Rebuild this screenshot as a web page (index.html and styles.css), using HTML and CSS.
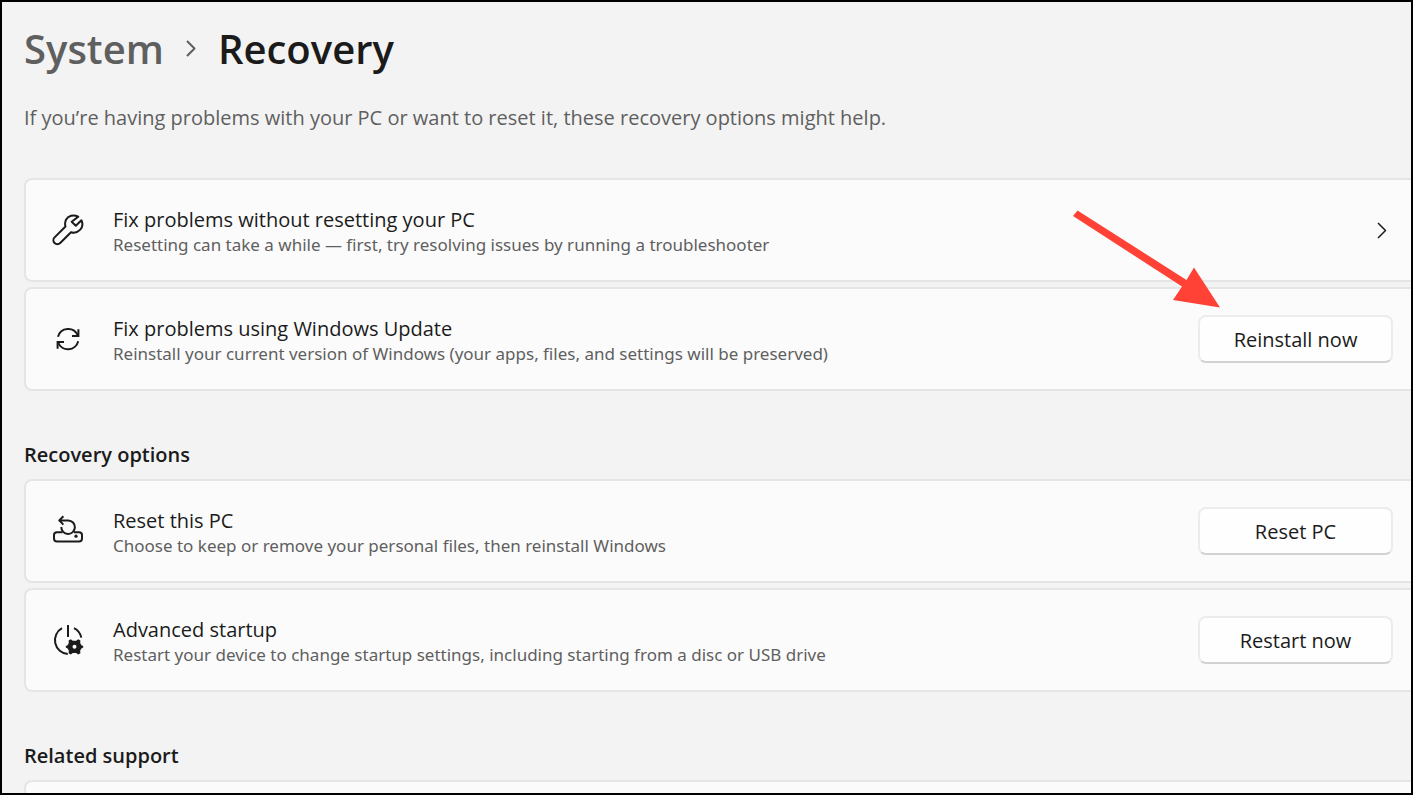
FILE: index.html
```html
<!DOCTYPE html>
<html lang="en">
  <head>
    <meta charset="UTF-8" />
    <meta name="viewport" content="width=device-width, initial-scale=1.0" />
    <title>System - Recovery</title>
    <link rel="stylesheet" href="styles.css">
  </head>
  <body>
    <header class="page-header">
      <nav class="breadcrumb" aria-label="Breadcrumb">
        <a class="breadcrumb-link" href="#system">System</a>
        <svg class="breadcrumb-chevron" viewBox="0 0 14 20" aria-hidden="true">
          <path d="M3 2 L10.5 9.5 L3 17" />
        </svg>
        <h1>Recovery</h1>
      </nav>
      <p class="intro">If you’re having problems with your PC or want to reset it, these recovery options might help.</p>
    </header>

    <main>
      <section class="card-list">
        <a class="card" href="#troubleshoot">
          <svg class="card-icon" viewBox="0 0 32 32" aria-hidden="true">
            <path d="M26.2 2.7 C21.5 0.2 16 1.6 14 5.8 C12.9 8.1 12.8 10.3 13.5 12.5 L2.6 23.4 C1 25 1 27.4 2.6 29 C4.2 30.6 6.6 30.6 8.2 29 L19 18.2 C22.3 19.2 25.6 18.4 28 15.9 C30.5 13.4 31 9.6 29.4 6.3 L23.8 11.8 L19.7 7.8 Z" />
          </svg>
          <div class="card-text">
            <h3>Fix problems without resetting your PC</h3>
            <p>Resetting can take a while — first, try resolving issues by running a troubleshooter</p>
          </div>
          <svg class="card-chevron" viewBox="0 0 12 18" aria-hidden="true">
            <path d="M2 2 L9.5 9.5 L2 17" />
          </svg>
        </a>
        <div class="card">
          <svg class="card-icon" viewBox="0 0 32 32" aria-hidden="true">
            <path d="M6 13.8 A10.5 10.5 0 0 1 25.8 12.4 M26.2 18.2 A10.5 10.5 0 0 1 6.2 19.6" />
            <path class="arrow-tip" d="M26.4 6.3 V13 H20 M5.6 25.7 V19 H12" />
          </svg>
          <div class="card-text">
            <h3>Fix problems using Windows Update</h3>
            <p>Reinstall your current version of Windows (your apps, files, and settings will be preserved)</p>
          </div>
          <button type="button">Reinstall now</button>
        </div>
      </section>

      <section class="card-list">
        <h2>Recovery options</h2>
        <div class="card">
          <svg class="card-icon" viewBox="0 0 32 32" aria-hidden="true">
            <path d="M10.5 17.2 H5 C3 17.2 2 18.3 2 20 V23.4 C2 25.3 3 26.4 5 26.4 H27 C29 26.4 30 25.3 30 23.4 V20 C30 18.3 29 17.2 27 17.2 H22" />
            <path d="M11.4 1.2 L7.2 5.4 L11.4 9.6 M7.2 5.4 H16.3 A6.8 6.8 0 1 1 9.3 12" />
            <circle class="solid" cx="24" cy="21.2" r="1.6" />
          </svg>
          <div class="card-text">
            <h3>Reset this PC</h3>
            <p>Choose to keep or remove your personal files, then reinstall Windows</p>
          </div>
          <button type="button">Reset PC</button>
        </div>
        <div class="card">
          <svg class="card-icon" viewBox="0 0 32 32" aria-hidden="true">
            <path d="M10 4.2 A13.8 13.8 0 0 0 15.8 30 M22 4.2 A13.8 13.8 0 0 1 29.3 13.6 M16 1 V13" />
            <path class="solid" fill-rule="evenodd" d="M18.8 15.2 L20.8 16.8 H24.2 L26.2 15.2 L28.4 16.4 L28.2 19.1 L29.4 21.2 L31.2 22 V23.6 L29.4 24.4 L28.2 26.5 L28.4 29.2 L26.2 30.4 L24.2 28.9 H20.8 L18.8 30.4 L16.6 29.2 L16.8 26.5 L15.6 24.4 L13.8 23.6 V22 L15.6 21.2 L16.8 19.1 L16.6 16.4 Z M22.5 20.8 A2 2 0 1 0 22.5 24.8 A2 2 0 1 0 22.5 20.8 Z" />
          </svg>
          <div class="card-text">
            <h3>Advanced startup</h3>
            <p>Restart your device to change startup settings, including starting from a disc or USB drive</p>
          </div>
          <button type="button">Restart now</button>
        </div>
      </section>

      <section class="card-list">
        <h2>Related support</h2>
        <div class="card"></div>
      </section>
    </main>

    <!-- Red arrow pointing at the Reinstall button -->
    <svg class="pointer" viewBox="0 0 148 98" aria-hidden="true">
      <path d="M5.5 0.5 L114.5 70 L122 57.5 L148 97.5 L101 90 L110 76.5 L1 6 Z" />
    </svg>
  </body>
</html>
```

FILE: styles.css
```css
* {
  box-sizing: border-box;
}

body {
  position: relative;
  display: flex;
  flex-direction: column;
  height: 100vh;
  margin: 0;
  padding-left: 22px;
  overflow: hidden;
  border: 2px solid #000;
  background-color: #f3f3f3;
  color: #1b1b1b;
  font-family: "Open Sans", "Noto Sans", sans-serif;
  font-size: 20px;
}

h1,
h2,
h3,
p {
  margin: 0;
}

svg {
  flex-shrink: 0;
  fill: none;
  stroke: #1b1b1b;
  stroke-width: 2;
  stroke-linejoin: round;
}

.page-header {
  padding-top: 20px;
}

.breadcrumb {
  display: flex;
  align-items: center;
  gap: 20px;
  font-size: 40px;
  font-weight: 600;
  line-height: 54px;
}

.breadcrumb h1 {
  font-size: 40px;
  font-weight: 600;
}

.breadcrumb-link {
  color: #5f5f5f;
  text-decoration: none;
}

.breadcrumb-chevron {
  width: 14px;
  height: 20px;
  stroke: #5f5f5f;
}

.intro {
  margin-top: 28px;
  color: #5f5f5f;
  line-height: 28px;
}

main {
  display: flex;
  flex: 1;
  flex-direction: column;
  gap: 48px;
  min-height: 0;
  margin-top: 46px;
  overflow: hidden;
}

.card-list {
  display: flex;
  flex-direction: column;
  flex-shrink: 0;
  gap: 5px;
}

.card-list h2 {
  padding: 2px 0 5px;
  font-size: 20px;
  font-weight: 600;
  line-height: 28px;
}

.card {
  display: flex;
  align-items: center;
  gap: 29px;
  min-height: 104px;
  padding: 0 18px 0 26px;
  border: 2px solid #e5e5e5;
  border-right: none;
  border-radius: 8px 0 0 8px;
  background-color: #fbfbfb;
  color: inherit;
  text-decoration: none;
}

.card-icon {
  width: 32px;
  height: 32px;
}

.card-icon .arrow-tip {
  stroke-linejoin: miter;
}

.card-icon .solid {
  fill: #1b1b1b;
  stroke: none;
}

.card-text {
  flex: 1;
  padding-top: 3px;
}

.card-text h3 {
  font-size: 20px;
  font-weight: 400;
  line-height: 26px;
}

.card-text p {
  color: #5f5f5f;
  font-family: "Noto Sans", sans-serif;
  font-size: 17px;
  line-height: 24px;
}

.card-chevron {
  width: 12px;
  height: 18px;
  margin-right: 5px;
  stroke-width: 1.5;
}

button {
  width: 195px;
  height: 48px;
  border: 2px solid #ececec;
  border-bottom-color: #d2d2d2;
  border-radius: 8px;
  background-color: #fefefe;
  color: #1b1b1b;
  font-family: inherit;
  font-size: 20px;
}

.pointer {
  position: absolute;
  top: 208px;
  right: 191px;
  width: 148px;
  height: 98px;
  fill: #ff4136;
  stroke: none;
}
```
